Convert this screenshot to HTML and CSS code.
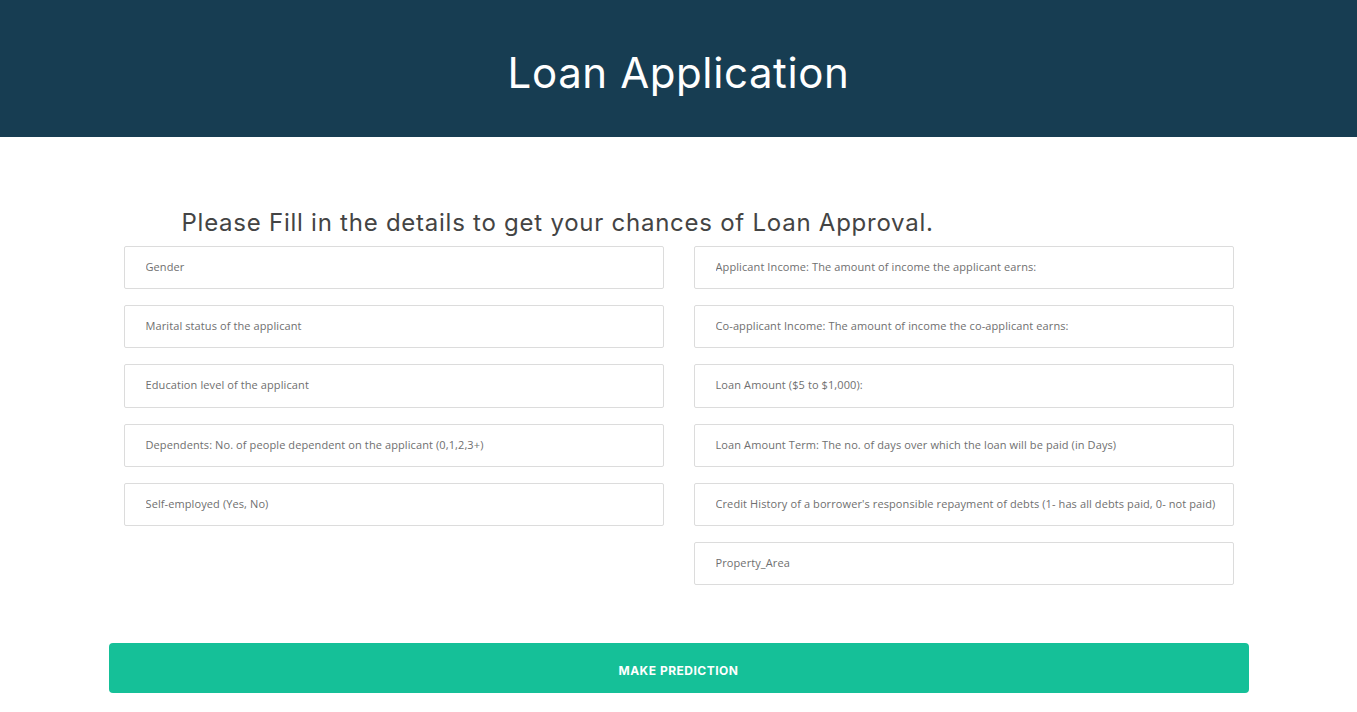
FILE: index.html
```html
<!DOCTYPE html>
<html lang="en">
<head>
<meta charset="utf-8">
<title>Loan Application</title>
<link rel="stylesheet" href="styles.css">
</head>
<body>
<header class="hero">
  <h1 class="hero-title">Loan Application</h1>
</header>
<main class="container">
  <h2 class="lead">Please Fill in the details to get your chances of Loan Approval.</h2>
  <form class="form">
    <div class="grid">
      <div class="col">
        <input class="field" type="text" placeholder="Gender">
        <input class="field" type="text" placeholder="Marital status of the applicant">
        <input class="field" type="text" placeholder="Education level of the applicant">
        <input class="field" type="text" placeholder="Dependents: No. of people dependent on the applicant (0,1,2,3+)">
        <input class="field" type="text" placeholder="Self-employed (Yes, No)">
      </div>
      <div class="col">
        <input class="field" type="text" placeholder="Applicant Income: The amount of income the applicant earns:">
        <input class="field" type="text" placeholder="Co-applicant Income: The amount of income the co-applicant earns:">
        <input class="field" type="text" placeholder="Loan Amount ($5 to $1,000):">
        <input class="field" type="text" placeholder="Loan Amount Term: The no. of days over which the loan will be paid (in Days)">
        <input class="field" type="text" placeholder="Credit History of a borrower's responsible repayment of debts (1- has all debts paid, 0- not paid)">
        <input class="field" type="text" placeholder="Property_Area">
      </div>
    </div>
    <button class="submit" type="submit">MAKE PREDICTION</button>
  </form>
</main>
</body>
</html>
```
FILE: styles.css
```css
* { box-sizing: border-box; }
html, body { margin: 0; padding: 0; background: #fff; }
body { font-family: "Open Sans", "Liberation Sans", sans-serif; }

.hero {
  background: #173d52;
  height: 137px;
  display: flex;
  align-items: center;
  justify-content: center;
}
.hero-title {
  margin: 0;
  color: #fff;
  font-family: Inter, "Open Sans", sans-serif;
  font-weight: 400;
  font-size: 42px;
  letter-spacing: 0.6px;
  line-height: 1;
  padding-top: 8px;
}

.container {
  width: 1140px;
  margin: 0 auto;
}
.lead {
  margin: 71px 0 0 73px;
  font-family: Inter, "Open Sans", sans-serif;
  font-weight: 400;
  font-size: 24px;
  line-height: 30px;
  color: #444;
  letter-spacing: 0.75px;
}
.form { margin-top: 8px; }
.grid {
  display: grid;
  grid-template-columns: 540px 540px;
  column-gap: 30px;
  padding: 0 15px;
}
.col { display: flex; flex-direction: column; gap: 16px; }
.field {
  display: block;
  width: 100%;
  height: 43.2px;
  border: 1px solid #dcdcdc;
  border-radius: 2px;
  padding: 0 6px 2px 21px;
  font-family: "Open Sans", sans-serif;
  font-size: 11px;
  letter-spacing: 0.1px;
  color: #555;
  background: #fff;
  outline: none;
}
.field::placeholder { color: #6f6f6f; opacity: 1; }

.submit {
  display: block;
  width: 100%;
  height: 50px;
  margin-top: 58px;
  padding-top: 5px;
  border: 0;
  border-radius: 4px;
  background: #15c098;
  color: #fff;
  font-family: Inter, "Open Sans", sans-serif;
  font-weight: 700;
  font-size: 12px;
  letter-spacing: 0.5px;
  cursor: pointer;
}
```
